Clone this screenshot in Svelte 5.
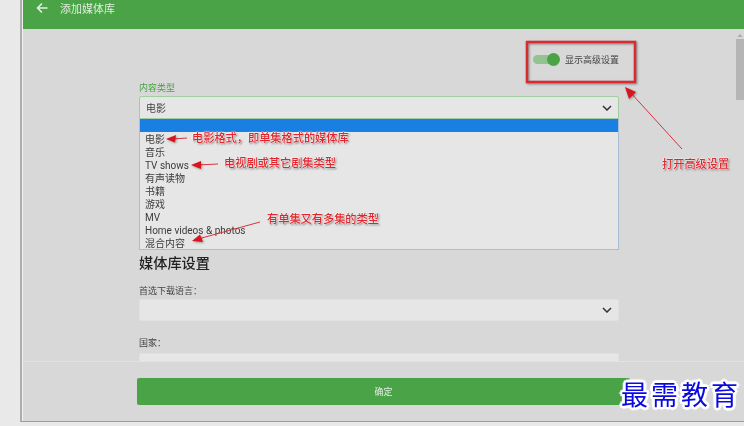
<script>
  const options = ["电影", "音乐", "TV shows", "有声读物", "书籍", "游戏", "MV", "Home videos & photos", "混合内容"];
  const notes = [
    { text: "电影格式，即单集格式的媒体库", x: 192, y: 129 },
    { text: "电视剧或其它剧集类型", x: 224, y: 154 },
    { text: "有单集又有多集的类型", x: 267, y: 210 },
    { text: "打开高级设置", x: 662, y: 155 },
  ];
  const arrows = [
    "M187 138 L172 139",
    "M218 164 L197 165",
    "M260 222 L198 239",
    "M682 149 L630 92",
  ];
  const heads = [
    "M166 139 L176 135 L175 142.500 Z",
    "M191 165 L201 161 L201 169 Z",
    "M192 241 L200 234.500 L203 242 Z",
    "M625 87 L636 92 L629 99 Z",
  ];
</script>

<div class="page">
  <div class="frame">
    <div class="dialog">
      <header>
        <svg class="back" width="12" height="12" viewBox="0 0 12 12">
          <path d="M6 1.500 1.500 6 6 10.500M1.500 6H11.500" fill="none" stroke="#e4f0e3" stroke-width="1.600" />
        </svg>
        <span>添加媒体库</span>
      </header>

      <div class="content">
        <div class="form">
          <div class="toggle-row">
            <span class="toggle"><i></i></span>
            <span>显示高级设置</span>
          </div>

          <div class="field-label green">内容类型</div>
          <div class="select active">
            <span>电影</span>
            <svg width="10" height="6" viewBox="0 0 10 6"><path d="M1 1 5 5 9 1" fill="none" stroke="#333" stroke-width="1.500" /></svg>
          </div>
          <div class="list">
            <div class="selected"></div>
            {#each options as o}
              <div class="option">{o}</div>
            {/each}
          </div>

          <h2>媒体库设置</h2>

          <div class="field-label lang">首选下载语言：</div>
          <div class="select plain">
            <span></span>
            <svg width="10" height="6" viewBox="0 0 10 6"><path d="M1 1 5 5 9 1" fill="none" stroke="#333" stroke-width="1.500" /></svg>
          </div>

          <div class="field-label country">国家：</div>
          <div class="select plain"></div>
        </div>
        <div class="scrollbar">
          <svg width="8" height="6" viewBox="0 0 8 6"><path d="M1.500 5 4 2 6.500 5Z" fill="#aaa" /></svg>
          <div class="thumb"></div>
        </div>
      </div>

      <footer>
        <div class="ok">确定</div>
      </footer>
    </div>
  </div>

  <!-- annotations drawn over the screenshot -->
  <svg class="marks" width="744" height="426" viewBox="0 0 744 426">
    <rect class="box" x="527" y="42" width="108" height="40" />
    {#each arrows as d}
      <path class="line" {d} />
    {/each}
    {#each heads as d}
      <path class="head" {d} />
    {/each}
  </svg>
  {#each notes as n}
    <span class="note" style="left:{n.x}px;top:{n.y}px">{n.text}</span>
  {/each}
  <span class="watermark">最需教育</span>
</div>

<style>
  :global(body) {
    margin: 0;
    background: #e9e9e9;
    overflow: hidden;
  }
  .page {
    position: relative;
    width: 744px;
    height: 426px;
    overflow: hidden;
    font-family: "Noto Sans CJK SC", "Noto Sans", sans-serif;
    color: #444;
    filter: blur(0.5px);
  }
  .frame {
    margin-left: 20px;
    height: 422px;
    border-left: 2px solid #aeaeae;
    border-bottom: 1px solid #9d9d9d;
    padding-left: 1px;
    background: #efefef;
    box-sizing: border-box;
  }
  .dialog {
    height: 421px;
    display: flex;
    flex-direction: column;
    background: #d8d8d8;
  }
  header {
    height: 29px;
    flex: none;
    background: #4aa347;
    display: flex;
    align-items: flex-start;
    padding: 2px 0 0 13px;
    box-sizing: border-box;
    color: #dfeede;
    font-size: 11px;
    line-height: 13px;
  }
  header span {
    margin-left: 12px;
  }
  .content {
    flex: 1;
    min-height: 0;
    display: flex;
    overflow: hidden;
  }
  .form {
    width: 480px;
    margin-left: 116px;
    padding-top: 21px;
    flex: none;
  }
  .toggle-row {
    height: 18px;
    display: flex;
    align-items: center;
    justify-content: flex-end;
    gap: 7px;
    font-size: 9px;
    color: #444;
  }
  .toggle {
    position: relative;
    width: 25px;
    height: 9px;
    border-radius: 5px;
    background: #92c390;
  }
  .toggle i {
    position: absolute;
    right: -2px;
    top: -2px;
    width: 13px;
    height: 13px;
    border-radius: 50%;
    background: #4aa347;
  }
  .field-label {
    font-size: 9px;
    line-height: 12px;
    color: #444;
  }
  .green {
    margin-top: 14px;
    margin-bottom: 2px;
    color: #4aa347;
  }
  .lang {
    margin-top: 14px;
    margin-bottom: 2px;
  }
  .country {
    margin-top: 16px;
    margin-bottom: 4px;
  }
  .select {
    height: 23px;
    box-sizing: border-box;
    display: flex;
    align-items: center;
    justify-content: space-between;
    padding: 0 6px;
    background: #e6e6e6;
    border: 1px solid #e1e1e1;
    border-radius: 2px;
    font-size: 10px;
    color: #444;
  }
  .plain {
    height: 22px;
  }
  .active {
    border-color: #a2cda0;
    border-radius: 2px 2px 0 0;
  }
  .list {
    height: 131px;
    box-sizing: border-box;
    background: #e6e6e6;
    border: 1px solid #aabdd6;
    border-top: none;
  }
  .selected {
    height: 13px;
    margin-bottom: 1px;
    background: #1a7fe3;
  }
  .option {
    height: 13px;
    line-height: 13px;
    padding-left: 5px;
    font-family: Roboto, "Noto Sans CJK SC", sans-serif;
    font-size: 10px;
    color: #3c3c3c;
    white-space: nowrap;
  }
  h2 {
    margin: 3px 0 0;
    font-size: 14.200px;
    line-height: 18px;
    font-weight: 500;
    color: #222;
  }
  .scrollbar {
    position: absolute;
    right: 0;
    top: 29px;
    width: 8px;
  }
  .scrollbar svg {
    display: block;
    margin-top: 3px;
  }
  .thumb {
    margin-top: 1px;
    height: 61px;
    background: #b5b5b5;
  }
  footer {
    height: 60px;
    flex: none;
    box-sizing: border-box;
    border-top: 1px solid #e2e2e2;
    padding: 16px 0 0 114px;
  }
  .ok {
    width: 493px;
    height: 27px;
    border-radius: 2px;
    background: #4aa347;
    color: #e4f0e3;
    font-size: 9px;
    line-height: 27px;
    text-align: center;
  }
  .marks {
    position: absolute;
    left: 0;
    top: 0;
  }
  .box {
    fill: none;
    stroke: #d92b30;
    stroke-width: 2.500;
    filter: drop-shadow(1px 1px 1px rgba(0, 0, 0, 0.4));
  }
  .line {
    fill: none;
    stroke: #d9343a;
    stroke-width: 1;
  }
  .head {
    fill: #d8141c;
    filter: drop-shadow(1px 1px 1px rgba(0, 0, 0, 0.35));
  }
  .note {
    position: absolute;
    font-size: 11.200px;
    line-height: 16px;
    font-weight: 500;
    color: #e0262c;
    white-space: nowrap;
    text-shadow: 0 0 1px #fff, 0 0 2px #fff, 0 0 2px #fff, 1px 1px 2px rgba(0, 0, 0, 0.7);
  }
  .watermark {
    position: absolute;
    left: 621px;
    top: 375px;
    font-size: 27px;
    line-height: 38px;
    letter-spacing: 3px;
    color: #0a0ae0;
    white-space: nowrap;
    text-shadow: 2px 0 0 #fff, -2px 0 0 #fff, 0 2px 0 #fff, 0 -2px 0 #fff, 2px 2px 0 #fff, -2px 2px 0 #fff, 2px -2px 0 #fff, -2px -2px 0 #fff, 3px 0 1px #fff, -3px 0 1px #fff, 0 3px 1px #fff, 0 -3px 1px #fff;
  }
</style>
